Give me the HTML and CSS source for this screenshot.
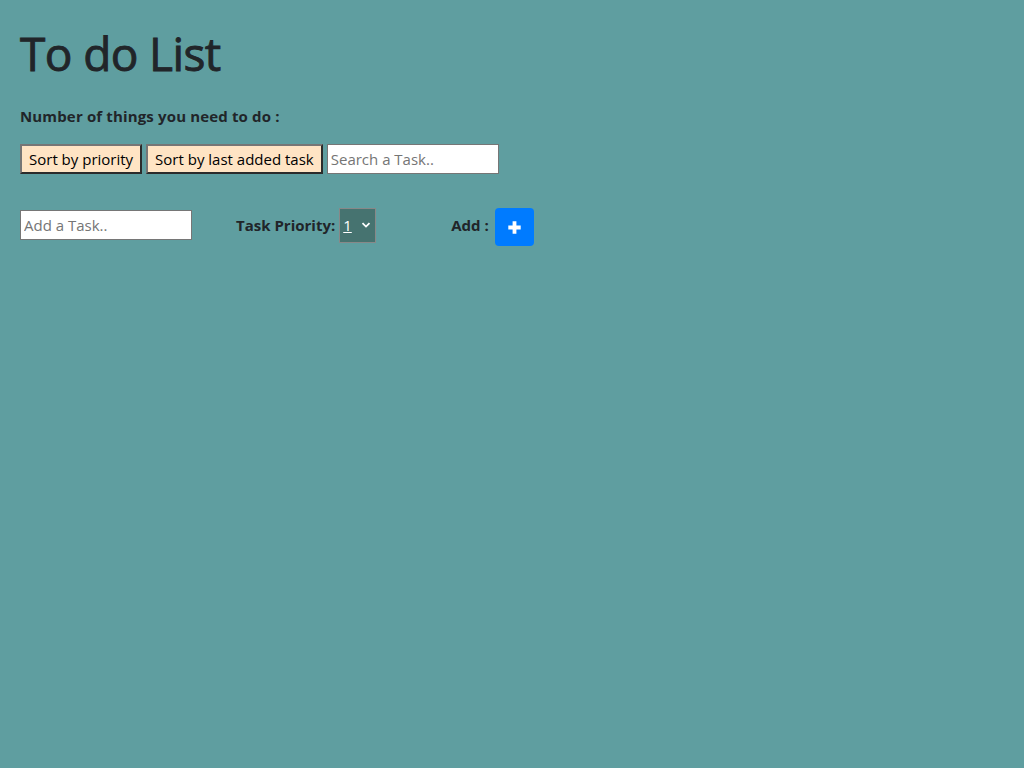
FILE: index.html
```html
<!DOCTYPE html>
<html>
<head>
<meta charset="utf-8">
<title>To do List</title>
<link rel="stylesheet" href="styles.css">
</head>
<body>
<div class="app">
  <h1 class="title">To do List</h1>
  <p class="count">Number of things you need to do :</p>
  <div class="toolbar">
    <button class="sort-btn">Sort by priority</button>
    <button class="sort-btn">Sort by last added task</button>
    <input class="text-input" type="text" placeholder="Search a Task..">
  </div>
  <div class="add-row">
    <input class="text-input" type="text" placeholder="Add a Task..">
    <label class="label priority-label">Task Priority:</label>
    <span class="select-wrap">
      <select class="priority-select">
        <option>1</option>
        <option>2</option>
        <option>3</option>
      </select>
      <svg class="chevron" width="10" height="8" viewBox="0 0 10 8"><path d="M1.5 2.2 L5 5.6 L8.5 2.2" fill="none" stroke="#ffffff" stroke-width="1.8"/></svg>
    </span>
    <label class="label add-label">Add :</label>
    <button class="add-btn" aria-label="Add">
      <svg width="13" height="13" viewBox="0 0 13 13"><path d="M4.6 0.3h3.8v4.3h4.3v3.8H8.4v4.3H4.6V8.4H0.3V4.6h4.3z" fill="#ffffff"/></svg>
    </button>
  </div>
</div>
</body>
</html>
```

FILE: styles.css
```css
html, body {
  margin: 0;
  padding: 0;
}
body {
  background: #5f9ea0;
  color: #212529;
  font-family: "Open Sans", "Noto Sans", sans-serif;
  font-size: 16px;
  min-height: 768px;
}
.app {
  padding: 20px 20px;
}
.title {
  font-size: 46px;
  font-weight: 400;
  line-height: 1.2;
  margin: 6px 0 0 0;
  letter-spacing: -0.6px;
  -webkit-text-stroke: 0.9px #212529;
}
.count {
  font-size: 15px;
  font-weight: 700;
  margin: 24px 0 0 0;
  line-height: 22px;
  letter-spacing: 0.15px;
}
.toolbar {
  display: flex;
  align-items: center;
  gap: 4px;
  margin-top: 17px;
}
.sort-btn {
  background: #ffe4c4;
  font-family: inherit;
  font-size: 15px;
  color: #000;
  height: 30px;
  padding: 0 7px;
  border: 2px solid;
  border-color: #767676 #2b2b2b #2b2b2b #767676;
  line-height: 26px;
}
.text-input {
  box-sizing: border-box;
  width: 172px;
  height: 30px;
  border: 1px solid #767676;
  background: #fff;
  font-family: inherit;
  font-size: 15px;
  padding: 0 3px;
  color: #212529;
}
.text-input::placeholder {
  color: #757575;
}
.add-row {
  display: flex;
  align-items: center;
  margin-top: 30px;
}
.label {
  font-weight: 700;
  font-size: 15px;
}
.priority-label {
  margin-left: 44px;
  margin-right: 4px;
}
.select-wrap {
  position: relative;
  display: block;
  width: 37px;
  height: 35px;
}
.priority-select {
  appearance: none;
  -webkit-appearance: none;
  box-sizing: border-box;
  width: 37px;
  height: 35px;
  background: #467370;
  color: #ffffff;
  border: 1px solid #888;
  font-family: inherit;
  font-size: 15px;
  padding: 0 0 0 3px;
  text-decoration: underline;
}
.chevron {
  position: absolute;
  left: 22px;
  top: 13px;
  pointer-events: none;
}
.add-label {
  margin-left: 75px;
  margin-right: 6px;
}
.add-btn {
  width: 39px;
  height: 38px;
  margin-top: 4px;
  background: #007bff;
  border: none;
  border-radius: 4px;
  display: flex;
  align-items: center;
  justify-content: center;
  padding: 0;
}
```
